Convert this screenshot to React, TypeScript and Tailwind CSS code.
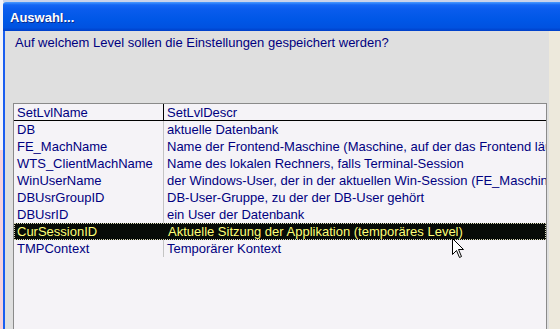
import React from "react";

const rows: [string, string][] = [
  ["DB", "aktuelle Datenbank"],
  ["FE_MachName", "Name der Frontend-Maschine (Maschine, auf der das Frontend läuft)"],
  ["WTS_ClientMachName", "Name des lokalen Rechners, falls Terminal-Session"],
  ["WinUserName", "der Windows-User, der in der aktuellen Win-Session (FE_Maschine) angemeldet ist"],
  ["DBUsrGroupID", "DB-User-Gruppe, zu der der DB-User gehört"],
  ["DBUsrID", "ein User der Datenbank"],
  ["CurSessionID", "Aktuelle Sitzung der Applikation (temporäres Level)"],
  ["TMPContext", "Temporärer Kontext"],
];

export default function App() {
  return (
    <div
      className="relative w-[560px] h-[329px] overflow-hidden flex bg-[#ede9dc]"
      style={{ fontFamily: '"Liberation Sans", Arial, sans-serif' }}
    >
      {/* left background strip */}
      <div className="w-[3px] h-full flex flex-col">
        <div className="h-[150px] bg-[#f4f4fa]" />
        <div className="flex-1 bg-[#f6d2dc]" />
      </div>
      <div className="flex-1 flex flex-col">
        <div className="h-[2px] bg-[#c9d3ea]" />
        {/* title bar */}
        <div className="h-[29px] flex items-center pl-[7px] pt-[2px] rounded-tl-[3px] bg-[linear-gradient(to_bottom,#4a9cff_0%,#1466f4_10%,#0a5ced_25%,#0057e7_60%,#0052e0_88%,#003fc8_100%)]">
          <span className="text-white font-bold text-[13px] leading-none [text-shadow:1px_1px_0_#0a2a8a]">
            Auswahl...
          </span>
        </div>
        <div className="flex-1 flex">
          {/* window body */}
          <div className="w-[546px] border-l-2 border-[#1a5ef0] bg-[#dfdfdf] flex flex-col pt-[4px]">
            <p className="pl-[10px] text-[13px] leading-[15px] text-[#000080] whitespace-nowrap">
              Auf welchem Level sollen die Einstellungen gespeichert werden?
            </p>
            <div className="mt-[53px] ml-[8px] w-[534px] flex-1 border border-b-0 border-[#8a8a8a] bg-[#f5f3f7] text-[13px] text-[#000080] overflow-hidden">
              <div className="h-[17px] flex border-b border-black">
                <div className="w-[150px] border-r border-black pl-[3px] flex items-center leading-none">
                  SetLvlName
                </div>
                <div className="flex-1 pl-[3px] flex items-center leading-none">SetLvlDescr</div>
              </div>
              {rows.map(([a, b], i) => {
                const sel = i === 6;
                return (
                  <div
                    key={a}
                    className={
                      sel
                        ? "h-[17px] flex bg-[#070b07] text-[#ffff78] border border-dotted border-[#d8d8b8]"
                        : "h-[17px] flex"
                    }
                  >
                    <div
                      className={
                        sel
                          ? "w-[150px] pl-[2px] flex items-center leading-none whitespace-nowrap"
                          : "w-[150px] border-r border-[#c4c4c4] pl-[3px] flex items-center leading-none whitespace-nowrap"
                      }
                    >
                      {a}
                    </div>
                    <div className="flex-1 min-w-0 pl-[3px] flex items-center leading-none whitespace-nowrap overflow-hidden">
                      {b}
                    </div>
                  </div>
                );
              })}
            </div>
          </div>
          <div className="flex-1" />
        </div>
      </div>
      {/* mouse cursor */}
      <svg
        className="absolute left-[452px] top-[238px]"
        width="13"
        height="21"
        viewBox="0 0 13 21"
      >
        <path
          d="M0.5 0.5 L0.5 16.5 L4.5 12.5 L7.5 19.5 L9.5 18.5 L6.5 11.5 L11.5 11.5 Z"
          fill="#ffffff"
          stroke="#000000"
          strokeWidth="1"
        />
      </svg>
    </div>
  );
}
